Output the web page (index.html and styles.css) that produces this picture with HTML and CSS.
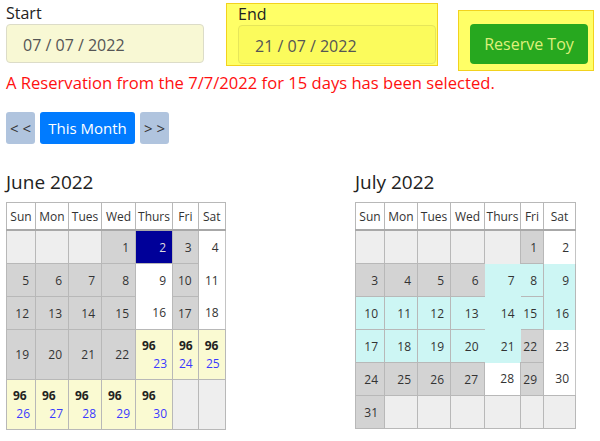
FILE: index.html
```html
<!DOCTYPE html>
<html lang="en">
<head>
    <meta charset="UTF-8">
    <meta name="viewport" content="width=device-width, initial-scale=1.0">
    <title>Toy Reservation</title>
    <link rel="stylesheet" href="styles.css">
</head>
<body>
    <div class="top-row">
        <div class="field">
            <label for="start-date">Start</label>
            <input type="text" id="start-date" class="date-input" value="07 / 07 / 2022">
        </div>
        <div class="field highlight end-box">
            <label for="end-date">End</label>
            <input type="text" id="end-date" class="date-input end-input" value="21 / 07 / 2022">
        </div>
        <div class="highlight reserve-box">
            <button class="reserve-btn">Reserve Toy</button>
        </div>
    </div>
    <p class="message">A Reservation from the 7/7/2022 for 15 days has been selected.</p>

    <div class="nav">
        <button class="nav-btn arrow">&lt; &lt;</button>
        <button class="nav-btn month">This Month</button>
        <button class="nav-btn arrow">&gt; &gt;</button>
    </div>

    <div class="calendars">
        <div class="calendar">
            <h2>June 2022</h2>
            <table class="cal june">
                <thead>
                    <tr><th>Sun</th><th>Mon</th><th>Tues</th><th>Wed</th><th>Thurs</th><th>Fri</th><th>Sat</th></tr>
                </thead>
                <tbody>
                    <tr><td class="empty"></td><td class="empty"></td><td class="empty"></td><td class="grey">1</td><td class="sel">2</td><td class="grey">3</td><td class="free">4</td></tr>
                    <tr><td class="grey">5</td><td class="grey">6</td><td class="grey">7</td><td class="grey">8</td><td class="free">9</td><td class="grey">10</td><td class="free">11</td></tr>
                    <tr><td class="grey">12</td><td class="grey">13</td><td class="grey">14</td><td class="grey">15</td><td class="free">16</td><td class="grey">17</td><td class="free">18</td></tr>
                    <tr class="tall"><td class="grey">19</td><td class="grey">20</td><td class="grey">21</td><td class="grey">22</td>
                        <td class="stock"><div class="qty">96</div><div class="day">23</div></td>
                        <td class="stock"><div class="qty">96</div><div class="day">24</div></td>
                        <td class="stock"><div class="qty">96</div><div class="day">25</div></td></tr>
                    <tr class="tall">
                        <td class="stock"><div class="qty">96</div><div class="day">26</div></td>
                        <td class="stock"><div class="qty">96</div><div class="day">27</div></td>
                        <td class="stock"><div class="qty">96</div><div class="day">28</div></td>
                        <td class="stock"><div class="qty">96</div><div class="day">29</div></td>
                        <td class="stock"><div class="qty">96</div><div class="day">30</div></td>
                        <td class="empty"></td><td class="empty"></td></tr>
                </tbody>
            </table>
        </div>

        <div class="calendar">
            <h2>July 2022</h2>
            <table class="cal july">
                <thead>
                    <tr><th>Sun</th><th>Mon</th><th>Tues</th><th>Wed</th><th>Thurs</th><th>Fri</th><th>Sat</th></tr>
                </thead>
                <tbody>
                    <tr><td class="empty"></td><td class="empty"></td><td class="empty"></td><td class="empty"></td><td class="empty"></td><td class="grey">1</td><td class="free">2</td></tr>
                    <tr><td class="grey">3</td><td class="grey">4</td><td class="grey">5</td><td class="grey">6</td><td class="range open">7</td><td class="range">8</td><td class="range edge">9</td></tr>
                    <tr><td class="range">10</td><td class="range">11</td><td class="range">12</td><td class="range">13</td><td class="range open">14</td><td class="range">15</td><td class="range edge">16</td></tr>
                    <tr><td class="range">17</td><td class="range">18</td><td class="range">19</td><td class="range">20</td><td class="range open">21</td><td class="grey">22</td><td class="free">23</td></tr>
                    <tr><td class="grey">24</td><td class="grey">25</td><td class="grey">26</td><td class="grey">27</td><td class="free">28</td><td class="grey">29</td><td class="free">30</td></tr>
                    <tr><td class="grey">31</td><td class="empty"></td><td class="empty"></td><td class="empty"></td><td class="empty"></td><td class="empty"></td><td class="empty"></td></tr>
                </tbody>
            </table>
        </div>
    </div>
</body>
</html>
```

FILE: styles.css
```css
/* Global Styles */
body {
    font-family: 'Open Sans', 'Noto Sans', sans-serif;
    margin: 0;
    padding: 3px 6px;
    color: #222;
    background-color: #fff;
}

/* Date pickers + reserve */
.top-row {
    display: flex;
    align-items: flex-start;
}

.field label {
    display: block;
    font-size: 16px;
    line-height: 21px;
    color: #222;
}

.date-input {
    display: block;
    box-sizing: border-box;
    width: 198px;
    height: 39px;
    padding: 2px 16px 0;
    border: 1px solid #dcdcc8;
    border-radius: 4px;
    background-color: #f8f8d4;
    font-family: inherit;
    font-size: 16px;
    color: #555;
}

.highlight {
    background-color: #ffff66;
    border: 1px solid #f2d21e;
    box-sizing: border-box;
}

.end-box {
    margin-left: 22px;
    width: 212px;
    height: 63px;
    padding: 0 1px 0 11px;
}

.end-input {
    background-color: #fbfb5c;
    border-color: #e6e65a;
}

.reserve-box {
    margin-left: 20px;
    margin-top: 7px;
    width: 139px;
    height: 61px;
    padding: 13px 0 0 11px;
}

.reserve-btn {
    width: 118px;
    height: 40px;
    border: none;
    border-radius: 4px;
    background-color: #27a81f;
    color: #dff07a;
    font-family: inherit;
    font-size: 16px;
    cursor: pointer;
}

.message {
    margin: 2px 0 0;
    color: #ff1010;
    font-size: 16.6px;
    line-height: 20px;
}

/* Month navigation */
.nav {
    display: flex;
    gap: 5px;
    margin-top: 19px;
}

.nav-btn {
    height: 32px;
    border: none;
    border-radius: 3px;
    font-family: inherit;
    font-size: 15px;
    cursor: pointer;
}

.arrow {
    width: 29px;
    padding: 0;
    background-color: #b0c4de;
    color: #333;
}

.month {
    width: 95px;
    background-color: #007bff;
    color: #fff;
}

/* Calendars */
.calendars {
    display: grid;
    grid-template-columns: 349px auto;
    margin-top: 25px;
}

.calendar h2 {
    margin: 0 0 7px;
    font-size: 19px;
    font-weight: normal;
    line-height: 26px;
    color: #222;
}

.cal {
    border-collapse: collapse;
    border: 1px solid #c4c4c4;
    font-size: 12px;
    color: #333;
}

.cal th {
    height: 26px;
    padding: 0;
    font-weight: normal;
    background-color: #fff;
    border: 1px solid #b8b8b8;
    border-bottom: 2px solid #a8a8a8;
}

.cal th:nth-child(1) { width: 28px; }
.cal th:nth-child(2) { width: 32px; }
.cal th:nth-child(3) { width: 32px; }
.cal th:nth-child(4) { width: 33px; }
.cal th:nth-child(5) { width: 36px; }
.cal th:nth-child(6) { width: 23px; }
.june th:nth-child(7) { width: 26px; }
.july th:nth-child(5) { width: 35px; }
.july th:nth-child(6) { width: 22px; }
.july th:nth-child(7) { width: 31px; }

.cal td {
    height: 32px;
    padding: 0 6px 0 0;
    text-align: right;
    vertical-align: middle;
    border: 1px solid #b8b8b8;
}

.cal tr.tall td {
    height: 49px;
}

.cal td.empty {
    background-color: #eeeeee;
}

.cal td.grey {
    background-color: #d3d3d3;
}

.cal td.free {
    background-color: #fff;
    border: none;
}

.cal td.sel {
    background-color: #000099;
    color: #ddd;
}

.cal td.stock {
    background-color: #fafad2;
    padding: 0 5px 0 6px;
}

.stock .qty {
    text-align: left;
    font-weight: bold;
    color: #222;
    line-height: 16px;
}

.stock .day {
    text-align: right;
    color: #3a3aff;
    line-height: 16px;
    margin-top: 2px;
}

.cal td.range {
    background-color: #cdf6f4;
}

.cal td.range.open {
    border-style: hidden;
}

.cal td.range.edge {
    border-top: none;
    border-bottom: none;
}
```
